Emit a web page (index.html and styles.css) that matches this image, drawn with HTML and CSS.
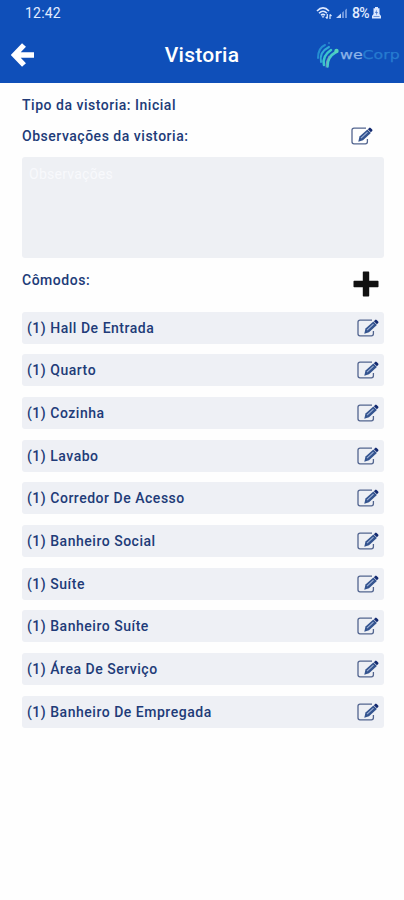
FILE: index.html
```html
<!DOCTYPE html>
<html lang="pt-BR">
<head>
<meta charset="utf-8">
<title>Vistoria</title>
<link rel="stylesheet" href="styles.css">
</head>
<body>
<svg class="defs" width="0" height="0" aria-hidden="true">
  <symbol id="edit" viewBox="0 0 22 18">
    <path d="M15 1.200H3Q1 1.200 1 3.200v11.600q0 2 2 2h11.400q2 0 2-2v-2.800" fill="none" stroke="#53658f" stroke-width="1.300"/>
    <path d="M7.300 14.800l1.200-5.200 7.900-7.200 3.500 3.500-7.900 7.400z" fill="#34548f"/>
    <path d="M10 11.200l6.500-6" stroke="#9fb3d8" stroke-width="1.100"/>
    <path d="M16.900 2.200l1.300-1.300q.7-.6 1.400 0l1.600 1.600q.6.700 0 1.400l-1.300 1.300z" fill="#132a70"/>
  </symbol>
</svg>
<header class="header">
  <div class="status">
    <span class="time">12:42</span>
    <div class="indicators">
      <svg class="wifi" viewBox="0 0 17 14" fill="none" stroke="#dce8ff" stroke-width="1.600">
        <path d="M1 5q6-6.300 12 0M3 7.200q4-4 8 0M5 9.200q2-1.700 4 0"/>
        <path d="M7 12l-1.500-1.700h3z" fill="#dce8ff" stroke="none"/>
        <path d="M11.300 8v4.500M9.800 11l1.500 1.600M14 13V8.500M15.500 10L14 8.400" stroke-width="1.200"/>
      </svg>
      <svg class="signal" viewBox="0 0 12 11">
        <path d="M0 10l5-4.500V10z" fill="#c5d7fa"/>
        <path d="M6 10V4.500L8 3v7zM9 10V2l2-1.500V10z" fill="#6f97dd"/>
      </svg>
      <span class="percent">8%</span>
      <svg class="battery" viewBox="0 0 9 12">
        <path d="M3 0h3v1.200h1.500V7L9 9v2.500H0V9l1.500-2V1.200H3z" fill="#dce8ff"/>
        <path d="M4.800 2.500L3 6h1.300L4 8.500 6 5H4.700z" fill="#4979d0"/>
        <path d="M1.500 9.500h6" stroke="#6f97dd"/>
      </svg>
    </div>
  </div>
  <div class="toolbar">
    <svg class="back" viewBox="0 0 24 26"><path d="M13 3L3.500 13l9.500 10M4 13h19" fill="none" stroke="#fff" stroke-width="5.400"/></svg>
    <h1 class="title">Vistoria</h1>
    <div class="logo">
      <svg class="mark" viewBox="0 0 24 28" fill="none" stroke-linecap="round">
        <path d="M2 17Q2 7 9 4" stroke="#258fd2" stroke-width="2"/>
        <path d="M5 21Q3 11 13 6" stroke="#32a9d6" stroke-width="2"/>
        <path d="M8 24Q6 15 15 9" stroke="#3bc5cc" stroke-width="2.600"/>
        <path d="M11.500 25.500Q11 16 20 11" stroke="#48cbc8" stroke-width="2.600"/>
        <path d="M10 26Q9.500 20 13 15" stroke="#8a9aba" stroke-width=".8"/>
        <circle cx="13" cy="2" r="1" fill="#2c80cf"/>
        <circle cx="20.500" cy="10" r="2.200" fill="#55d5bb"/>
      </svg>
      <span class="brand"><span class="we">we</span><span class="corp">Corp</span></span>
    </div>
  </div>
</header>
<main class="content">
  <p class="label type">Tipo da vistoria: Inicial</p>
  <div class="notes-head">
    <span class="label notes-label">Observações da vistoria:</span>
    <svg class="edit"><use href="#edit"/></svg>
  </div>
  <div class="notes">Observações</div>
  <div class="rooms-head">
    <span class="label">Cômodos:</span>
    <svg class="plus" viewBox="0 0 26 26"><path d="M10.500.500h5q.7 0 .7.700v8.600h8.600q.7 0 .7.700v5q0 .7-.7.700h-8.600v8.600q0 .7-.7.700h-5q-.7 0-.7-.7v-8.600H1.200q-.7 0-.7-.7v-5q0-.7.7-.7h8.600V1.200q0-.7.700-.7z" fill="#111"/></svg>
  </div>
  <ul class="rooms">
    <li class="room"><span>(1) Hall De Entrada</span><svg class="edit"><use href="#edit"/></svg></li>
    <li class="room"><span>(1) Quarto</span><svg class="edit"><use href="#edit"/></svg></li>
    <li class="room"><span>(1) Cozinha</span><svg class="edit"><use href="#edit"/></svg></li>
    <li class="room"><span>(1) Lavabo</span><svg class="edit"><use href="#edit"/></svg></li>
    <li class="room"><span>(1) Corredor De Acesso</span><svg class="edit"><use href="#edit"/></svg></li>
    <li class="room"><span>(1) Banheiro Social</span><svg class="edit"><use href="#edit"/></svg></li>
    <li class="room"><span>(1) Suíte</span><svg class="edit"><use href="#edit"/></svg></li>
    <li class="room"><span>(1) Banheiro Suíte</span><svg class="edit"><use href="#edit"/></svg></li>
    <li class="room"><span>(1) Área De Serviço</span><svg class="edit"><use href="#edit"/></svg></li>
    <li class="room"><span>(1) Banheiro De Empregada</span><svg class="edit"><use href="#edit"/></svg></li>
  </ul>
</main>
</body>
</html>
```
FILE: styles.css
```css
* { box-sizing: border-box; }
body {
  margin: 0;
  min-height: 900px;
  background: #fefefe;
  color: #213b78;
  font-family: Roboto, "Liberation Sans", sans-serif;
  font-size: 14px;
  font-weight: 500;
  letter-spacing: .52px;
}
svg { display: block; flex: none; }
.defs { position: absolute; }
.header {
  height: 83px;
  background: #0f4fb9;
  color: #fff;
}
.status {
  display: flex;
  justify-content: space-between;
  height: 26px;
  padding: 0 23px 0 25px;
  line-height: 26px;
  font-size: 14px;
  font-weight: 400;
  color: #e2ecff;
}
.time { letter-spacing: .2px; }
.indicators { display: flex; align-items: center; }
.wifi { width: 17px; height: 14px; }
.signal { width: 12px; height: 11px; margin-left: 3px; }
.percent { margin-left: 4px; letter-spacing: -.6px; font-weight: 500; }
.battery { width: 9px; height: 12px; margin-left: 3px; }
.toolbar {
  display: grid;
  grid-template-columns: 1fr auto 1fr;
  align-items: center;
  height: 57px;
  padding: 0 4px 0 11px;
}
.back { width: 24px; height: 26px; }
.title {
  margin: 0 0 0 -7px;
  font-size: 21px;
  font-weight: 500;
  letter-spacing: .25px;
}
.logo { display: flex; justify-content: flex-end; align-items: center; }
.mark { width: 24px; height: 28px; }
.brand {
  width: 60px;
  font-family: "DejaVu Sans", sans-serif;
  font-size: 12.500px;
  font-weight: 400;
  letter-spacing: 0;
  -webkit-text-stroke: .25px;
  transform: scaleX(1.260);
  transform-origin: left center;
}
.we { color: #8db4e8; }
.corp { color: #267bd0; }
.content { padding: 13px 20px 0 22px; }
.label { line-height: 18px; }
.type { margin: 0; }
.notes-head {
  display: flex;
  justify-content: space-between;
  align-items: center;
  height: 18px;
  margin-top: 13px;
  padding-right: 11px;
}
.edit { width: 22px; height: 18px; }
.notes {
  height: 101px;
  margin-top: 12px;
  padding: 8px 7px;
  border-radius: 3px;
  background: #eef0f4;
  color: #f8f9fc;
  font-weight: 400;
  letter-spacing: .25px;
  line-height: 18px;
}
.rooms-head {
  display: flex;
  justify-content: space-between;
  height: 53.500px;
  padding: 13px 5.500px 0 0;
}
.plus { width: 26px; height: 26px; }
.rooms {
  display: grid;
  gap: 10.700px;
  margin: 0;
  padding: 0;
  list-style: none;
}
.room {
  display: flex;
  align-items: center;
  justify-content: space-between;
  height: 32px;
  padding: 0 5px;
  border-radius: 3px;
  background: #eef0f5;
}
```
